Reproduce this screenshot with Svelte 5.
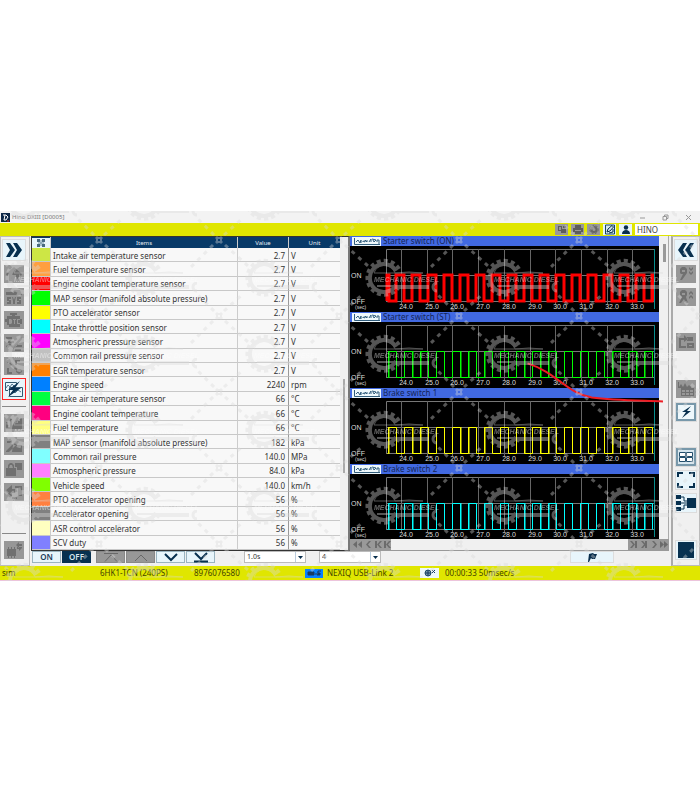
<script>
  let user = $state("HINO");
  let interval = $state("1.0s");
  let columns = $state("4");

  const items = [
    ["#cde645", "Intake air temperature sensor", "2.7", "V"],
    ["#ff9f40", "Fuel temperature sensor", "2.7", "V"],
    ["#ff0000", "Engine coolant temperature sensor", "2.7", "V"],
    ["#00ff00", "MAP sensor (manifold absolute pressure)", "2.7", "V"],
    ["#ffff00", "PTO accelerator sensor", "2.7", "V"],
    ["#00ffff", "Intake throttle position sensor", "2.7", "V"],
    ["#ff00ff", "Atmospheric pressure sensor", "2.7", "V"],
    ["#c0c0c0", "Common rail pressure sensor", "2.7", "V"],
    ["#ff8000", "EGR temperature sensor", "2.7", "V"],
    ["#0080ff", "Engine speed", "2240", "rpm"],
    ["#00ff40", "Intake air temperature sensor", "66", "°C"],
    ["#ff0080", "Engine coolant temperature", "66", "°C"],
    ["#ffff80", "Fuel temperature", "66", "°C"],
    ["#808080", "MAP sensor (manifold absolute pressure)", "182", "kPa"],
    ["#80ffff", "Common rail pressure", "140.0", "MPa"],
    ["#ff80ff", "Atmospheric pressure", "84.0", "kPa"],
    ["#80ff00", "Vehicle speed", "140.0", "km/h"],
    ["#ff8040", "PTO accelerator opening", "56", "%"],
    ["#808080", "Accelerator opening", "56", "%"],
    ["#ffffc0", "ASR control accelerator", "56", "%"],
    ["#8080ff", "SCV duty", "56", "%"]
  ];

  const charts = [
    { name: "Starter switch (ON)", color: "#ff0000", width: 3, first: 46, lead: true },
    { name: "Starter switch (ST)", color: "#00ff00", width: 1, first: 38 },
    { name: "Brake switch 1", color: "#ffff00", width: 1, first: 38 },
    { name: "Brake switch 2", color: "#00ffff", width: 1, first: 38 }
  ];

  const ticks = Array.from({ length: 10 }, (_, i) => ({
    x: Math.round(51 + i * 25.7),
    label: (24 + i).toFixed(1)
  }));

  const slowEdges = [38, 62, 70, 110, 118, 134, 174, 190, 198, 262, 278, 286, 294];

  function wave(chart) {
    let d = chart.lead ? "M37 55V29H39V55H46" : "M37 55H38";
    for (let x = chart.first; x < 303; x += 16) {
      d += `V29H${Math.min(x + 8, 303)}V55`;
      if (x + 16 < 303) d += `H${x + 16}`;
    }
    return d;
  }

  const leftTop = [
    ["Home", "M2 9L10 2L18 9L17 11L15 9V16H12V10H8V16H5V9L3 11Z"],
    ["System select", "M2 4H9L10 2H16L18 7H2ZM3 9H7V11H5V12H7V16H3V14H5V13H3ZM8 9H9L10 12L11 9H12L11 13V16H9V13ZM13 9H17V11H15V12H17V16H13V14H15V13H13Z"],
    ["Trouble codes", "M6 2H13V4H11V5H16V8H18V13H16V16H5V14H3V11H1V8H3V5H8V4H6ZM5 8V13H7L8 12V9L7 8ZM9 8V9H10V13H11V9H12V8ZM13 8V13H16V12H14V9H16V8Z"],
    ["Data check", "M2 3H8V5H2ZM4 7H10V9H4ZM2 12L6 9L9 12L17 3L18 5L10 15L6 12L3 15ZM12 11H18V13H12ZM11 15H17V17H11Z"],
    ["Active test", "M3 3L6 2L7 5L14 12L17 12L18 15L15 17L12 15L12 13L5 6L3 6ZM11 3H16V5H13V8H11ZM3 11H5V15H8V17H3Z"]
  ];
  const leftLow = [
    ["Graph files", "M2 15V8H4V13H6V5H8V12L13 3L15 4L12 9H14V7H16V4H18V15Z"],
    ["Edit data", "M2 14L13 3L15 5L5 15H2ZM9 8H18V15H8ZM3 4H8V6H3Z"],
    ["Lock data", "M2 8H4V5L6 3H8L10 5V8H12V16H2ZM6 5L5 8H9L8 5ZM11 3H18V10H13V7H11Z"],
    ["Send data", "M1 8L8 2V6H11V10H8V14ZM11 3H18V13H14V5H11ZM8 14H13V16H8Z"]
  ];
  const rightTop = [
    ["Zoom in", "M4 4L6 2H9L11 4V8L6 15H4L7 9H5L4 8ZM6 5V7H9V5ZM13 2L15 4L17 2V4L15 6L13 4ZM13 6L15 8L17 6V8L15 10L13 8Z"],
    ["Zoom out", "M4 4L6 2H9L11 4V7L10 9L12 15H10L8 11L5 15H3L6 9L4 7ZM6 5V7H9V5ZM13 5L15 3L17 5V7L15 5L13 7ZM13 9L15 7L17 9V11L15 9L13 11Z"]
  ];
</script>

{#snippet mutedIcon(name, d)}
  <button type="button" class="tool muted" aria-label={name}>
    <svg viewBox="0 0 20 18" width="20" height="18"><path {d} fill="#707070" fill-rule="evenodd" /></svg>
  </button>
{/snippet}

<div class="app">
  <header class="title">
    <svg width="9" height="9" viewBox="0 0 9 9"><rect width="9" height="9" fill="#0d2747" /><path d="M2 2H5L7 4L5 7H3L4 2" fill="none" stroke="#fff" /><path d="M6 8L8 8" stroke="#d33" /></svg>
    <h1>Hino DXIII [D0005]</h1>
    <div class="window-buttons">
      <button type="button" aria-label="Minimize"><svg width="7" height="7" viewBox="0 0 7 7"><path d="M1 4H6" /></svg></button>
      <button type="button" aria-label="Restore"><svg width="7" height="7" viewBox="0 0 7 7"><path d="M1 2.5H4.500V6H1ZM2.500 2V1H6V4.500H5" /></svg></button>
      <button type="button" aria-label="Close"><svg width="7" height="7" viewBox="0 0 7 7"><path d="M1 1L6 6M6 1L1 6" /></svg></button>
    </div>
  </header>

  <div class="ribbon">
    <button type="button" class="mini off" aria-label="Copy screen"><svg width="12" height="11" viewBox="0 0 12 11"><path d="M2 2H6V5H10V9H5V7H2ZM3 3V6H5V3ZM7 2H10V4H7Z" fill="#5c5c5c" fill-rule="evenodd" /></svg></button>
    <button type="button" class="mini off" aria-label="Print"><svg width="12" height="11" viewBox="0 0 12 11"><path d="M3 1H9V4H11V8H9V10H3V8H1V4H3ZM3 6V7H9V6Z" fill="#5c5c5c" fill-rule="evenodd" /></svg></button>
    <button type="button" class="mini off" aria-label="Settings"><svg width="12" height="11" viewBox="0 0 12 11"><circle cx="6" cy="5.500" r="2.500" fill="none" stroke="#666" stroke-width="2" /><circle cx="6" cy="5.500" r="4.200" fill="none" stroke="#666" stroke-dasharray="2 1.500" /></svg></button>
    <button type="button" class="mini" aria-label="Memo"><svg width="12" height="11" viewBox="0 0 12 11"><path d="M1.500 1H10.500V10H1.500Z" fill="#d4e8f2" stroke="#174463" /><path d="M3 8L4 5L8 1.500L9.500 3L6 7ZM5 9L9 8V5" fill="none" stroke="#082d4c" /></svg></button>
    <button type="button" class="mini" aria-label="User"><svg width="12" height="11" viewBox="0 0 12 11"><circle cx="6" cy="3.500" r="2.200" fill="#082d4c" /><path d="M2 10C2 7 4 6 6 6S10 7 10 10Z" fill="#082d4c" /></svg></button>
    <input aria-label="User name" bind:value={user} />
  </div>

  <div class="work">
    <nav class="side left">
      <button type="button" class="tool wide" aria-label="Expand menu">
        <svg width="22" height="20" viewBox="0 0 22 20"><path d="M3 3H7L12 10L7 17H3L7 10ZM10 3H14L19 10L14 17H10L14 10Z" fill="#07304f" /></svg>
      </button>
      <div class="group">
        {#each leftTop as [name, d]}{@render mutedIcon(name, d)}{/each}
      </div>
      <button type="button" class="tool selected" aria-label="Data monitor">
        <svg width="20" height="18" viewBox="0 0 20 18"><path d="M1.500 2.500H12.500V5M1.500 2.500V10.500H4M5.500 7.500H18.500V16.500H5.500Z" fill="none" stroke="#315870" /><path d="M2 8L4 5L6 7L8 4L10 6M7 14L9 11L11 13L14 10L17 12" fill="none" stroke="#537890" /><path d="M16 1L4 10H9L4 17L17 8H11Z" fill="#07304f" /></svg>
      </button>
      <hr />
      <div class="group">
        {#each leftLow as [name, d]}{@render mutedIcon(name, d)}{/each}
      </div>
      <hr class="last" />
      {@render mutedIcon("Write memory", "M3 8H12V15H3ZM4 6H5V8H4ZM7 6H8V8H7ZM10 6H11V8H10ZM4 15H5V17H4ZM7 15H8V17H7ZM10 15H11V17H10ZM12 4L15 1V3H18V5H15V7ZM18 7L15 10V8H13V6H18Z")}
    </nav>

    <main>
      <div class="panes">
        <section class="items">
          <table>
            <thead>
              <tr>
                <th class="corner"><button type="button" aria-label="Select items"><svg width="8" height="8" viewBox="0 0 8 8"><path d="M0 0H3V3H0ZM5 0H8V3H5ZM0 5H3V8H0ZM5 5H8V8H5Z" fill="#4a6b80" /><path d="M1 4H7M4 1V7" fill="none" stroke="#6f8fa2" /></svg></button></th>
                <th>Items</th>
                <th>Value</th>
                <th>Unit</th>
              </tr>
            </thead>
            <tbody>
              {#each items as [color, name, value, unit]}
                <tr>
                  <td style="background: {color}"></td>
                  <td>{name}</td>
                  <td class="value">{value}</td>
                  <td>{unit}</td>
                </tr>
              {/each}
            </tbody>
          </table>
          <div class="scroll"><div class="thumb"></div></div>
        </section>

        <section class="graphs">
          <div class="graph-body">
            <div class="chart-list">
              {#each charts as chart}
                <article>
                  <div class="chart-head">
                    <button type="button" aria-label="Graph settings for {chart.name}">
                      <svg width="29" height="9" viewBox="0 0 29 9"><path d="M2.500 1V7.500H28M4 5L6 3L8 6L9 3V6M11 5V4L13 5V3L15 5V3M17 5L19 2V5M20 2L24 3L22 5L21 3M25 3V5M25 3H27V7" fill="none" stroke="#315d7c" /></svg>
                    </button>
                    <h2>{chart.name}</h2>
                  </div>
                  <svg class="plot" viewBox="0 0 309 66">
                    <path d="M36.500 56V3.500H305M36.500 29.500H305M36.500 55.500H305" fill="none" stroke="#777" />
                    {#each ticks as tick}
                      <path d="M{tick.x + 0.5} 3V58" stroke="#666" />
                    {/each}
                    {#if !chart.lead}
                      {#each slowEdges as x}
                        <path d="M{x + 1} 29V56" stroke={chart.color} stroke-width="2" opacity="0.5" />
                      {/each}
                    {/if}
                    <g transform={chart.lead ? undefined : "translate(0.5 0.5)"}>
                      <path d={wave(chart)} fill="none" stroke={chart.color} stroke-width={chart.width} />
                    </g>
                    <path d="M304.500 3V63" stroke="#078c8c" />
                    <text x="1" y="32">ON</text>
                    <text x="1" y="58">OFF</text>
                    <text x="5" y="63" class="sec">(sec)</text>
                    {#each ticks as tick}
                      <text x={tick.x + 5} y="63" text-anchor="middle">{tick.label}</text>
                    {/each}
                  </svg>
                </article>
              {/each}
            </div>
            <div class="scroll"><div class="thumb"></div></div>
            <svg class="trace" viewBox="0 0 320 304"><path d="M177 127C206 136 216 157 241 161C264 164 290 164 312 165" fill="none" stroke="#ee1c24" stroke-width="2" /></svg>
          </div>
          <div class="history">
            <button type="button" aria-label="Go back"><svg width="41" height="11" viewBox="0 0 41 11"><path d="M7 2L3 5.500L7 9ZM12 2L8 5.500L12 9ZM19 2H21L18 5.500L21 9H19L16 5.500ZM25 2H27V9H25ZM30 2H32L29 5.500L32 9H30L27 5.500ZM34 2H36V9H34ZM39 2H41L38 5.500L41 9H39L36 5.500Z" fill="#6b6b6b" /></svg></button>
            <button type="button" aria-label="Go forward"><svg width="41" height="11" viewBox="0 0 41 11"><path d="M2 2H4L7 5.500L4 9H2L5 5.500ZM7 2H9V9H7ZM13 2H15L18 5.500L15 9H13L16 5.500ZM17 2H19V9H17ZM24 2H26L29 5.500L26 9H24L27 5.500ZM32 2L36 5.500L32 9ZM36 2L40 5.500L36 9Z" fill="#6b6b6b" /></svg></button>
          </div>
        </section>
      </div>

      <div class="controls">
        <button type="button" class="toggle">ON</button>
        <button type="button" class="toggle dark">OFF</button>
        <button type="button" class="move off first" aria-label="Move to top"><svg width="20" height="11" viewBox="0 0 20 11"><path d="M3 1.500H17M4 9.500L10 3L16 9.500" /></svg></button>
        <button type="button" class="move off" aria-label="Move up"><svg width="20" height="11" viewBox="0 0 20 11"><path d="M4 9L10 3L16 9" /></svg></button>
        <button type="button" class="move" aria-label="Move down"><svg width="20" height="11" viewBox="0 0 20 11"><path d="M4 2L10 8L16 2" /></svg></button>
        <button type="button" class="move" aria-label="Move to bottom"><svg width="20" height="11" viewBox="0 0 20 11"><path d="M4 1L10 7L16 1M3 9.500H17" /></svg></button>
        <div class="pick">
          <select aria-label="Interval" bind:value={interval}><option>1.0s</option><option>0.5s</option></select>
          <svg width="9" height="11" viewBox="0 0 9 11"><path d="M2 4H7L4.500 7Z" fill="#082d4c" /></svg>
        </div>
        <div class="pick">
          <select aria-label="Graph count" bind:value={columns}><option>4</option><option>8</option></select>
          <svg width="9" height="11" viewBox="0 0 9 11"><path d="M2 4H7L4.500 7Z" fill="#082d4c" /></svg>
        </div>
        <button type="button" class="flag" aria-label="Set marker"><svg width="12" height="11" viewBox="0 0 12 11"><path d="M3 2L7 1L8 2L11 2L9 7L6 7L5 6L3 10H2Z" fill="#082d4c" /></svg></button>
      </div>
    </main>

    <nav class="side right">
      <button type="button" class="tool wide" aria-label="Collapse menu">
        <svg width="22" height="20" viewBox="0 0 22 20"><path d="M12 3H8L3 10L8 17H12L8 10ZM19 3H15L10 10L15 17H19L15 10Z" fill="#07304f" /></svg>
      </button>
      <div class="group">
        {#each rightTop as [name, d]}{@render mutedIcon(name, d)}{/each}
      </div>
      <div class="replay">
        {@render mutedIcon("Reload list", "M3 5H8V2L12 6L8 9V7H5V13H10V15H3ZM11 4H17V8H11ZM11 10H18V15H11ZM13 12V13H16V12Z")}
      </div>
      <div class="snap">
        {@render mutedIcon("Graph list", "M2 2H3V7L5 4L7 7L9 3L11 7L13 5L15 7V8H2ZM5 8H18V16H5ZM6 10V12H9V10ZM10 10V12H13V10ZM14 10V12H17V10ZM6 13V15H9V13ZM10 13V15H13V13ZM14 13V15H17V13Z")}
        <button type="button" class="tool" aria-label="Snapshot"><svg width="20" height="18" viewBox="0 0 20 18"><path d="M1 1H19V17H1Z" fill="#eef8fc" stroke="#7898aa" stroke-width="2" /><path d="M15 3L6 9H10L6 15L15 8H11Z" fill="#07304f" /></svg></button>
      </div>
      <div class="layouts">
        <button type="button" class="tool" aria-label="Table layout"><svg width="20" height="18" viewBox="0 0 20 18"><path d="M1 1H19V17H1Z" fill="#d8e7ef" stroke="#7898aa" stroke-width="2" /><path d="M3.500 4.500H9.500V8.500H3.500ZM10.500 4.500H16.500V8.500H10.500ZM3.500 9.500H9.500V13.500H3.500ZM10.500 9.500H16.500V13.500H10.500Z" fill="#fff" stroke="#244f6c" /></svg></button>
        <button type="button" class="tool" aria-label="Full screen"><svg width="20" height="18" viewBox="0 0 20 18"><path d="M2 6V2H7M13 2H18V6M18 12V16H13M7 16H2V12" fill="none" stroke="#07304f" stroke-width="2" /></svg></button>
        <button type="button" class="tool" aria-label="Distribute"><svg width="20" height="18" viewBox="0 0 20 18"><path d="M0 1H5V5H0ZM0 7H5V11H0ZM0 13H5V17H0ZM11 4H20V14H11Z" fill="#07304f" /><path d="M5 3H8V7H11M5 9H11M5 15H8V11H11" fill="none" stroke="#07304f" /></svg></button>
      </div>
      <button type="button" class="tool" aria-label="Record"><svg width="20" height="18" viewBox="0 0 20 18"><path d="M2 1H18V17H2Z" fill="#07304f" /></svg></button>
    </nav>
  </div>

  <footer>
    <span>sim</span>
    <span>6HK1-TCN (240PS)</span>
    <span>8976076580</span>
    <span class="device">
      <svg width="18" height="9" viewBox="0 0 18 9"><rect width="18" height="9" fill="#0880ff" /><path d="M3 3H9V6H3ZM10 5H12M13 2H16M13 2V4H15V6H12" fill="#173a65" stroke="#173a65" /></svg>
      NEXIQ USB-Link 2
    </span>
    <span class="timer">
      <svg width="19" height="10" viewBox="0 0 19 10"><rect width="19" height="10" fill="#eef8fc" /><circle cx="8" cy="5" r="3" fill="#7898aa" stroke="#244f6c" /><path d="M5 5H11M8 2V8M12 2L15 5M15 2L12 5" stroke="#173a65" /></svg>
      00:00:33 50msec/s
    </span>
  </footer>

  <svg class="watermark" width="100%" height="100%" aria-hidden="true">
    <defs>
      <g id="node" fill="none" stroke="#dadada"><rect x="-2" y="-2" width="4" height="4" stroke-width="2" /><path d="M-2 -4V4M2 -4V4M-4 -2H4M-4 2H4" stroke-dasharray="2 4" /></g>
      <pattern id="mark" x="-21" y="29" width="120" height="76" patternUnits="userSpaceOnUse">
        <use href="#node" x="0" y="0" /><use href="#node" x="120" y="0" /><use href="#node" x="0" y="76" /><use href="#node" x="120" y="76" />
        <path d="M6 5L29 26M114 5L90 29M115 71L99 55M5 71L25 53" fill="none" stroke="#dadada" stroke-width="3" stroke-dasharray="4 5" />
        <path d="M57 31A14 14 0 1 0 57 45" fill="none" stroke="#dadada" stroke-width="4" />
        <path d="M60 29A17 17 0 1 0 59 48" fill="none" stroke="#dadada" stroke-width="4" stroke-dasharray="4 3" />
        <path d="M35 33A11 11 0 0 1 56 33Q70 31 84 33H35" fill="none" stroke="#dadada" />
        <path d="M38 45H90V49H58L54 47H38Z" fill="#dadada" />
        <path d="M98 43A4 4 0 1 0 98 51" fill="none" stroke="#dadada" stroke-width="3" />
        <text x="35" y="42">MECHANIC DIESEL</text>
      </pattern>
    </defs>
    <rect width="100%" height="100%" fill="url(#mark)" />
  </svg>
</div>

<style>
  :global(body) { margin: 0; background: #fff; }
  .app { position: relative; margin-top: 211px; font: 8px/10px "Noto Sans", "Open Sans", sans-serif; color: #333; background: #f0f0f0; }
  button { display: flex; align-items: center; justify-content: center; margin: 0; padding: 0; border: 0; font: inherit; }
  svg { display: block; flex: none; }
  h1, h2 { margin: 0; font-weight: 400; }

  .title { display: flex; align-items: center; height: 12px; padding: 0 8px 0 1px; gap: 2px; background: #f3f3f3; }
  h1 { font-size: 6px; color: #777; }
  .window-buttons { display: flex; gap: 16px; margin-left: auto; }
  .window-buttons button { background: none; }
  .window-buttons path { fill: none; stroke: #999; }

  .ribbon { display: flex; justify-content: flex-end; align-items: center; gap: 3px; height: 13px; padding-right: 2px; background: #e0e600; }
  .mini { width: 13px; height: 11px; background: #e8f5fb; }
  .mini.off { background: #999; }
  .ribbon input { box-sizing: border-box; width: 63px; height: 11px; padding: 0 2px; border: 0; background: #fff; font: inherit; color: #444; }

  .work { display: grid; grid-template-columns: 31px 1fr 29px; }
  .side { display: flex; flex-direction: column; align-items: center; box-sizing: border-box; padding-top: 3px; border: 1px solid #bbb; }
  .left { margin-right: 1px; padding-right: 3px; }
  .right { border-left: 2px solid #aaa; }
  .group { display: grid; gap: 5px; padding-top: 5px; }
  .tool { width: 20px; height: 18px; background: #e8f5fb; box-shadow: 0 0 0 1px #dcdcdc; }
  .tool.wide { width: 22px; height: 20px; }
  .tool.muted { background: #979797; box-shadow: none; }
  .tool.selected { margin-top: 3px; width: 24px; height: 22px; border: 1px solid #f22; box-shadow: none; }
  hr { width: 24px; margin: 6px 0 2px; border: 0; border-top: 1px solid #888; }
  hr.last { margin: 32px 0 7px; }
  .replay { padding-top: 27px; }
  .snap { display: grid; gap: 5px; padding-top: 29px; }
  .layouts { display: grid; gap: 5px; padding: 27px 0 29px; }

  .panes { display: grid; grid-template-columns: 319fr 321fr; }
  .items { display: flex; box-sizing: border-box; height: 315px; border: 1px solid #333; border-right: 2px solid #777; background: #f0f0f0; }
  table { flex: 1; height: 313px; border-collapse: separate; border-spacing: 0; table-layout: fixed; background: #f8f8f8; }
  th { height: 11px; box-sizing: border-box; padding: 0; border-right: 1px solid #ccc; background: #083a68; color: #e6eef5; font-size: 6px; line-height: 8px; font-weight: 400; }
  th:nth-child(1) { width: 19px; }
  th:nth-child(3) { width: 51px; }
  th:nth-child(4) { width: 51px; border-right: 0; }
  .corner button { width: 18px; height: 10px; background: #e8f5fb; }
  td { padding: 2px 2px 0; border-right: 1px solid #ccc; border-bottom: 1px solid #c8c8c8; white-space: nowrap; }
  td:last-child { border-right: 0; }
  td:nth-child(3) { border-right-color: #999; }
  .value { padding-right: 3px; text-align: right; }
  .items .scroll { display: flex; flex-direction: column; align-items: center; width: 8px; }
  .items .thumb { width: 2px; height: 94px; margin-top: 142px; background: #aaa; }

  .graph-body { position: relative; display: flex; height: 303px; }
  .chart-list { flex: 1; overflow: hidden; background: #000; }
  .chart-head { display: flex; align-items: center; gap: 2px; height: 10px; padding-left: 2px; background: #4169e1; }
  .chart-head button { width: 29px; height: 9px; background: #eef8fc; }
  h2 { font-size: 8px; color: #142455; }
  .plot { width: 100%; }
  .plot text { font: 7px "Liberation Sans", sans-serif; fill: #ddd; }
  .plot .sec { font-size: 5px; }
  .graph-body .scroll { width: 10px; margin-right: 2px; background: #f0f0f0; border-right: 1px solid #aaa; box-sizing: border-box; }
  .graph-body .thumb { width: 3px; height: 18px; margin: 8px 0 0 4px; background: #999; }
  .trace { position: absolute; top: 0; left: 0; width: 100%; }
  .history { display: flex; justify-content: space-between; height: 11px; margin-right: 2px; border-bottom: 1px solid #999; }
  .history button { background: #999; }

  .controls { display: flex; align-items: flex-start; height: 15px; padding-left: 1px; gap: 1px; }
  .toggle { box-sizing: border-box; width: 29px; height: 12px; border: 1px solid #9ab4c0; background: #e8f5fb; color: #173a55; font-size: 8px; font-weight: 600; }
  .toggle.dark { background: #07304f; border-color: #07304f; color: #dbe7ee; }
  .move { box-sizing: border-box; width: 29px; height: 12px; border: 1px solid #9ab4c0; background: #e8f5fb; }
  .move path { fill: none; stroke: #07304f; stroke-width: 2; }
  .move.off { background: #979797; border-color: #888; }
  .move.off path { stroke: #686868; stroke-width: 1; }
  .move.first { margin-left: 4px; }
  .pick { display: flex; align-items: center; box-sizing: border-box; width: 62px; height: 12px; margin-left: 12px; border: 1px solid #bbb; background: #fff; }
  .pick:nth-of-type(1) { margin-left: 28px; }
  .pick select { flex: 1; min-width: 0; height: 10px; padding: 0 2px; border: 0; border-right: 1px solid #bcd; appearance: none; background: none; font: inherit; font-size: 7px; color: #333; }
  .flag { width: 44px; height: 12px; margin: 0 57px 0 auto; background: #e8f5fb; border: 1px solid #ddd; box-sizing: border-box; }

  footer { display: grid; grid-template-columns: 98px 94px 111px 115px 1fr; align-items: center; height: 14px; padding-left: 2px; border-bottom: 1px solid #ecc4dc; background: #e0e600; font-size: 8px; color: #444400; }
  .device, .timer { display: flex; align-items: center; gap: 4px; }
  .timer { gap: 6px; }

  .watermark { position: absolute; inset: 0; opacity: 0.39; pointer-events: none; }
  .watermark text { font: italic bold 7px "Liberation Sans", sans-serif; fill: #fff; }
</style>
